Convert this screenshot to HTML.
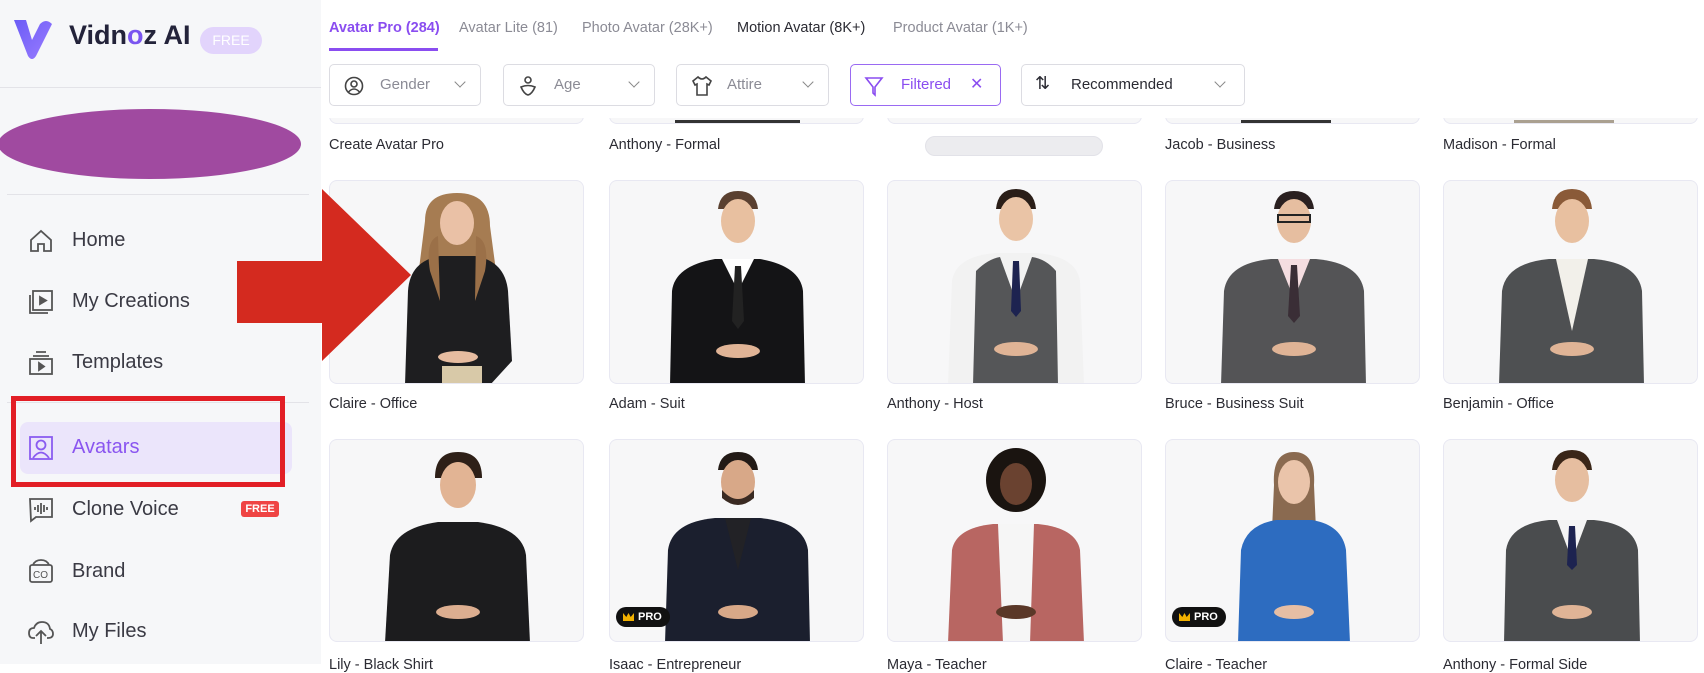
<!DOCTYPE html>
<html><head><meta charset="utf-8"><style>
*{margin:0;padding:0;box-sizing:border-box}
body{width:1704px;height:664px;overflow:hidden;background:#fff;font-family:"Liberation Sans",sans-serif;position:relative}
.abs{position:absolute}
#side{left:0;top:0;width:321px;height:664px;background:#f6f7f9;z-index:5}
.mi{position:absolute;left:72px;font-size:20px;color:#3a3a44}
.ic{position:absolute;left:27px;width:28px;height:28px}
.tab{position:absolute;top:20px;font-size:14.5px;color:#8b8b95;z-index:3}
.fb{position:absolute;top:64px;height:42px;border:1px solid #dcdce2;border-radius:5px;background:#fff;font-size:15px;color:#8b8b95;z-index:3}
.fb span{position:absolute;top:11px}
.chev{position:absolute;top:13px;width:8px;height:8px;border-right:1.5px solid #888;border-bottom:1.5px solid #888;transform:rotate(45deg)}
.card{position:absolute;width:255px;border:1px solid #e8e8f2;border-radius:8px;background:#f7f7f8;overflow:hidden}
.lbl{position:absolute;font-size:14.5px;color:#2b2b33}
.pro{position:absolute;left:6px;bottom:14px;background:#111;color:#fff;font-size:11px;font-weight:bold;padding:4px 8px 4px 22px;border-radius:10px}
.pro:before{content:"";position:absolute;left:7px;top:6px;width:11px;height:8px;background:#f2b100;clip-path:polygon(0 0,30% 50%,50% 0,70% 50%,100% 0,100% 100%,0 100%)}
</style></head><body>
<div id="side" class="abs">
  <svg class="abs" style="left:10px;top:14px" width="44" height="48" viewBox="0 0 44 48"><defs><linearGradient id="g" x1="0" y1="0" x2="1" y2="1"><stop offset="0" stop-color="#6b5cf6"/><stop offset="1" stop-color="#9a7cff"/></linearGradient></defs><path d="M4 6 L16 6 L22 26 L30 10 Q36 4 42 10 L26 42 Q22 48 18 42 Z" fill="url(#g)"/></svg>
  <div class="abs" style="left:69px;top:20px;font-size:27px;color:#23233a;font-weight:bold">Vidn<span style="color:#7a55f0">o</span>z AI</div>
  <div class="abs" style="left:200px;top:27px;width:62px;height:27px;border-radius:14px;background:#e2d4fc;color:#fff;font-size:14px;text-align:center;line-height:27px">FREE</div>
  <div class="abs" style="left:0;top:87px;width:321px;height:1px;background:#e3e3e8"></div>
  <div class="abs" style="left:-2px;top:109px;width:303px;height:70px;border-radius:50%;background:#a04aa0"></div>
  <div class="abs" style="left:7px;top:194px;width:302px;height:1px;background:#e3e3e8"></div>
  <svg class="ic" style="top:227px" viewBox="0 0 28 28" fill="none" stroke="#555" stroke-width="1.8"><path d="M4 13 L14 4 L24 13 V24 H17 V17 H11 V24 H4 Z"/></svg>
  <div class="mi" style="top:229px">Home</div>
  <svg class="ic" style="top:288px" viewBox="0 0 28 28" fill="none" stroke="#555" stroke-width="1.8"><rect x="6" y="3" width="19" height="19"/><path d="M3 7 V25 H21"/><path d="M13 9 L19 12.5 L13 16 Z" fill="#555"/></svg>
  <div class="mi" style="top:290px">My Creations</div>
  <svg class="ic" style="top:349px" viewBox="0 0 28 28" fill="none" stroke="#555" stroke-width="1.8"><path d="M9 3 H19 M6 7 H22"/><rect x="3" y="10" width="22" height="15"/><path d="M12 14 L17 17.5 L12 21 Z" fill="#555"/></svg>
  <div class="mi" style="top:351px">Templates</div>
  <div class="abs" style="left:7px;top:402px;width:302px;height:1px;background:#e3e3e8"></div>
  <div class="abs" style="left:20px;top:422px;width:272px;height:52px;border-radius:8px;background:#ebe5fb"></div>
  <svg class="ic" style="top:434px" viewBox="0 0 28 28" fill="none" stroke="#8a5cf0" stroke-width="1.8"><rect x="3" y="3" width="22" height="22"/><circle cx="14" cy="11" r="4.5"/><path d="M6 24 Q14 13 22 24"/></svg>
  <div class="mi" style="top:436px;color:#8a55f0">Avatars</div>
  <div class="abs" style="left:11px;top:396px;width:274px;height:91px;border:5px solid #e21e26"></div>
  <svg class="ic" style="top:496px" viewBox="0 0 28 28" fill="none" stroke="#555" stroke-width="1.8"><path d="M3 3 H25 V21 H9 L4 25 Z"/><path d="M8 11 V14 M11 9 V16 M14 7 V18 M17 9 V16 M20 11 V14"/></svg>
  <div class="mi" style="top:498px">Clone Voice</div>
  <div class="abs" style="left:241px;top:501px;width:38px;height:16px;background:#ef4444;border-radius:3px;color:#fff;font-size:11px;font-weight:bold;text-align:center;line-height:16px">FREE</div>
  <svg class="ic" style="top:557px" viewBox="0 0 28 28" fill="none" stroke="#555" stroke-width="1.8"><path d="M6 8 Q8 3 14 3 Q20 3 22 8"/><rect x="3" y="8" width="22" height="17" rx="2"/><text x="6" y="21" font-size="10" fill="#555" stroke="none" font-family="Liberation Sans">CO</text></svg>
  <div class="mi" style="top:560px">Brand</div>
  <svg class="ic" style="top:618px" viewBox="0 0 28 28" fill="none" stroke="#555" stroke-width="1.8"><path d="M8 20 H6 Q2 20 2 15 Q2 10 7 10 Q9 4 15 4 Q22 4 23 11 Q26 12 26 16 Q26 20 21 20 H20"/><path d="M14 26 V13 M9 18 L14 13 L19 18"/></svg>
  <div class="mi" style="top:620px">My Files</div>
</div>

<!-- row 1 partial (behind header) -->
<div class="card" style="left:329px;top:80px;height:44px"></div>
<div class="card" style="left:609px;top:80px;height:44px"><div class="abs" style="left:65px;bottom:0;width:125px;height:3px;background:#333"></div></div>
<div class="card" style="left:887px;top:80px;height:44px"></div>
<div class="card" style="left:1165px;top:80px;height:44px"><div class="abs" style="left:75px;bottom:0;width:90px;height:3px;background:#333"></div></div>
<div class="card" style="left:1443px;top:80px;height:44px"><div class="abs" style="left:70px;bottom:0;width:100px;height:3px;background:#aaa090"></div></div>
<div class="abs" style="left:321px;top:0;width:1383px;height:118px;background:#fff;z-index:2"></div>

<div class="tab" style="left:329px;color:#8a4df0;font-weight:bold">Avatar Pro (284)</div>
<div class="abs" style="left:329px;top:48px;width:109px;height:3px;background:#8a4df0;z-index:3"></div>
<div class="tab" style="left:459px">Avatar Lite (81)</div>
<div class="tab" style="left:582px">Photo Avatar (28K+)</div>
<div class="tab" style="left:737px;color:#2b2b33">Motion Avatar (8K+)</div>
<div class="tab" style="left:893px">Product Avatar (1K+)</div>

<div class="fb" style="left:329px;width:152px"><svg class="abs" style="left:14px;top:11px" width="20" height="20" viewBox="0 0 20 20" fill="none" stroke="#444" stroke-width="1.6"><circle cx="10" cy="10" r="8.5"/><circle cx="10" cy="8" r="3"/><path d="M4.5 16 Q10 10 15.5 16"/></svg><span style="left:50px">Gender</span><div class="chev" style="right:16px"></div></div>
<div class="fb" style="left:503px;width:152px"><svg class="abs" style="left:14px;top:10px" width="20" height="22" viewBox="0 0 20 22" fill="none" stroke="#444" stroke-width="1.6"><circle cx="10" cy="5" r="3"/><path d="M3 12 Q10 9 17 12 Q14 19 10 20 Q6 19 3 12Z"/></svg><span style="left:50px">Age</span><div class="chev" style="right:16px"></div></div>
<div class="fb" style="left:676px;width:153px"><svg class="abs" style="left:14px;top:10px" width="22" height="22" viewBox="0 0 22 22" fill="none" stroke="#444" stroke-width="1.6"><path d="M7 2 L2 6 L4 10 L6 9 V20 H16 V9 L18 10 L20 6 L15 2 Q11 6 7 2Z"/></svg><span style="left:50px">Attire</span><div class="chev" style="right:16px"></div></div>
<div class="fb" style="left:850px;width:151px;border-color:#9a6af2;color:#8a4df0"><svg class="abs" style="left:13px;top:10px" width="20" height="22" viewBox="0 0 20 22" fill="none" stroke="#8a4df0" stroke-width="1.6"><path d="M2 3 H18 L11 12 V20 L9 18 V12 Z"/></svg><span style="left:50px">Filtered</span><span style="left:119px;font-size:16px;top:9px">✕</span></div>
<div class="fb" style="left:1021px;width:224px;color:#2b2b33"><span style="left:13px;top:8px;font-size:18px">⇅</span><span style="left:49px">Recommended</span><div class="chev" style="right:20px"></div></div>

<div class="lbl" style="left:329px;top:137px">Create Avatar Pro</div>
<div class="lbl" style="left:609px;top:137px">Anthony - Formal</div>
<div class="abs" style="left:925px;top:136px;width:178px;height:20px;border-radius:10px;background:#ececef;border:1px solid #e2e2e8"></div>
<div class="lbl" style="left:1165px;top:137px">Jacob - Business</div>
<div class="lbl" style="left:1443px;top:137px">Madison - Formal</div>

<!-- row 2 -->
<div class="card" style="left:329px;top:180px;height:204px"><svg width="255" height="204"><path d="M95 40 Q95 12 127 12 Q160 12 160 45 L170 120 L85 120 Z" fill="#a67c52"/><ellipse cx="127" cy="42" rx="17" ry="22" fill="#eac1a6"/><path d="M75 204 L78 110 Q80 80 110 75 L145 75 Q175 80 178 110 L182 180 L160 204 Z" fill="#1e1e20"/><path d="M100 90 Q95 60 108 55 L110 120 Z M155 90 Q160 60 146 55 L145 120 Z" fill="#9b7048"/><rect x="112" y="185" width="40" height="19" fill="#d8c9a8"/><ellipse cx="128" cy="176" rx="20" ry="6" fill="#e6bca0"/></svg></div>
<div class="card" style="left:609px;top:180px;height:204px"><svg width="255" height="204"><path d="M108 28 Q110 10 128 10 Q146 10 148 28 Z" fill="#5a4030"/><ellipse cx="128" cy="40" rx="17" ry="22" fill="#e8c0a0"/><path d="M60 204 L62 110 Q65 85 105 78 L150 78 Q190 85 193 110 L195 204 Z" fill="#141416"/><path d="M112 78 L128 110 L144 78 Z" fill="#fff"/><path d="M125 85 L131 85 L134 140 L128 148 L122 140 Z" fill="#222"/><ellipse cx="128" cy="170" rx="22" ry="7" fill="#e0b496"/></svg></div>
<div class="card" style="left:887px;top:180px;height:204px"><svg width="255" height="204"><path d="M108 28 Q110 8 128 8 Q146 8 148 28 Z" fill="#2a1e18"/><ellipse cx="128" cy="38" rx="17" ry="22" fill="#eac4a6"/><path d="M60 204 L64 100 Q68 75 108 72 L148 72 Q188 75 192 100 L196 204 Z" fill="#f2f2f2"/><path d="M85 204 L88 90 Q100 78 112 76 L128 120 L144 76 Q158 78 168 90 L170 204 Z" fill="#555658"/><path d="M125 80 L131 80 L133 130 L128 136 L123 130 Z" fill="#1d2350"/><ellipse cx="128" cy="168" rx="22" ry="7" fill="#e0b496"/></svg></div>
<div class="card" style="left:1165px;top:180px;height:204px"><svg width="255" height="204"><path d="M108 28 Q110 10 128 10 Q146 10 148 28 Z" fill="#2a2020"/><ellipse cx="128" cy="40" rx="17" ry="22" fill="#e6bea0"/><rect x="112" y="34" width="32" height="7" fill="none" stroke="#222" stroke-width="2"/><path d="M55 204 L58 110 Q62 82 105 78 L150 78 Q194 82 198 110 L200 204 Z" fill="#545456"/><path d="M112 78 L128 118 L144 78 Z" fill="#f4dde0"/><path d="M125 84 L131 84 L134 135 L128 142 L122 135 Z" fill="#3a2e36"/><ellipse cx="128" cy="168" rx="22" ry="7" fill="#e0b496"/></svg></div>
<div class="card" style="left:1443px;top:180px;height:204px"><svg width="255" height="204"><path d="M108 28 Q110 8 128 8 Q146 8 148 28 Z" fill="#8a5a38"/><ellipse cx="128" cy="40" rx="17" ry="22" fill="#e8c0a0"/><path d="M55 204 L58 110 Q62 82 105 78 L150 78 Q194 82 198 110 L200 204 Z" fill="#4e5052"/><path d="M112 78 L128 150 L144 78 Z" fill="#f2f0ea"/><ellipse cx="128" cy="168" rx="22" ry="7" fill="#e0b496"/></svg></div>
<div class="lbl" style="left:329px;top:396px">Claire - Office</div>
<div class="lbl" style="left:609px;top:396px">Adam - Suit</div>
<div class="lbl" style="left:887px;top:396px">Anthony - Host</div>
<div class="lbl" style="left:1165px;top:396px">Bruce - Business Suit</div>
<div class="lbl" style="left:1443px;top:396px">Benjamin - Office</div>

<!-- row 3 -->
<div class="card" style="left:329px;top:439px;height:203px"><svg width="255" height="203"><path d="M105 38 Q105 12 128 12 Q152 12 152 38 Z" fill="#2e2018"/><ellipse cx="128" cy="45" rx="18" ry="23" fill="#e2b494"/><path d="M55 203 L60 115 Q65 88 108 82 L148 82 Q192 88 196 115 L200 203 Z" fill="#1c1c1e"/><ellipse cx="128" cy="172" rx="22" ry="7" fill="#dcae90"/></svg></div>
<div class="card" style="left:609px;top:439px;height:203px"><svg width="255" height="203"><path d="M108 30 Q110 12 128 12 Q146 12 148 30 Z" fill="#221a16"/><ellipse cx="128" cy="42" rx="17" ry="22" fill="#d8a888"/><path d="M112 50 Q128 68 144 50 L144 58 Q128 72 112 58Z" fill="#3a2a22"/><path d="M55 203 L58 110 Q62 82 105 78 L150 78 Q194 82 198 110 L200 203 Z" fill="#1b1f2e"/><path d="M115 78 L128 130 L141 78 Z" fill="#222226"/><ellipse cx="128" cy="172" rx="20" ry="7" fill="#d8a888"/></svg><div class="pro">PRO</div></div>
<div class="card" style="left:887px;top:439px;height:203px"><svg width="255" height="203"><ellipse cx="128" cy="40" rx="30" ry="32" fill="#1a1410"/><ellipse cx="128" cy="44" rx="16" ry="21" fill="#6a4230"/><path d="M60 203 L64 110 Q68 88 105 84 L150 84 Q188 88 192 110 L196 203 Z" fill="#b86662"/><path d="M110 84 L115 203 L142 203 L146 84 Z" fill="#f6f6f6"/><ellipse cx="128" cy="172" rx="20" ry="7" fill="#5a3828"/></svg></div>
<div class="card" style="left:1165px;top:439px;height:203px"><svg width="255" height="203"><path d="M108 45 Q106 12 128 12 Q150 12 148 45 L150 90 L106 90 Z" fill="#8a6a50"/><ellipse cx="128" cy="42" rx="16" ry="22" fill="#eac4aa"/><path d="M72 203 L75 110 Q80 85 110 80 L146 80 Q176 85 180 110 L184 203 Z" fill="#2d6cc0"/><ellipse cx="128" cy="172" rx="20" ry="7" fill="#e6bea4"/></svg><div class="pro">PRO</div></div>
<div class="card" style="left:1443px;top:439px;height:203px"><svg width="255" height="203"><path d="M108 30 Q110 10 128 10 Q146 10 148 30 Z" fill="#3a2618"/><ellipse cx="128" cy="40" rx="17" ry="22" fill="#e6bea0"/><path d="M60 203 L62 110 Q66 84 105 80 L150 80 Q190 84 194 110 L196 203 Z" fill="#4a4c4e"/><path d="M113 80 L128 120 L143 80 Z" fill="#f4f4f4"/><path d="M125 86 L131 86 L133 125 L128 130 L123 125 Z" fill="#1d2350"/><ellipse cx="128" cy="172" rx="20" ry="7" fill="#e0b496"/></svg></div>
<div class="lbl" style="left:329px;top:657px">Lily - Black Shirt</div>
<div class="lbl" style="left:609px;top:657px">Isaac - Entrepreneur</div>
<div class="lbl" style="left:887px;top:657px">Maya - Teacher</div>
<div class="lbl" style="left:1165px;top:657px">Claire - Teacher</div>
<div class="lbl" style="left:1443px;top:657px">Anthony - Formal Side</div>

<!-- red arrow -->
<svg class="abs" style="left:0;top:0;z-index:10" width="1704" height="664"><path d="M237 261 H322 V189 L411 275 L322 361 V323 H237 Z" fill="#d42a1f"/></svg>
</body></html>
